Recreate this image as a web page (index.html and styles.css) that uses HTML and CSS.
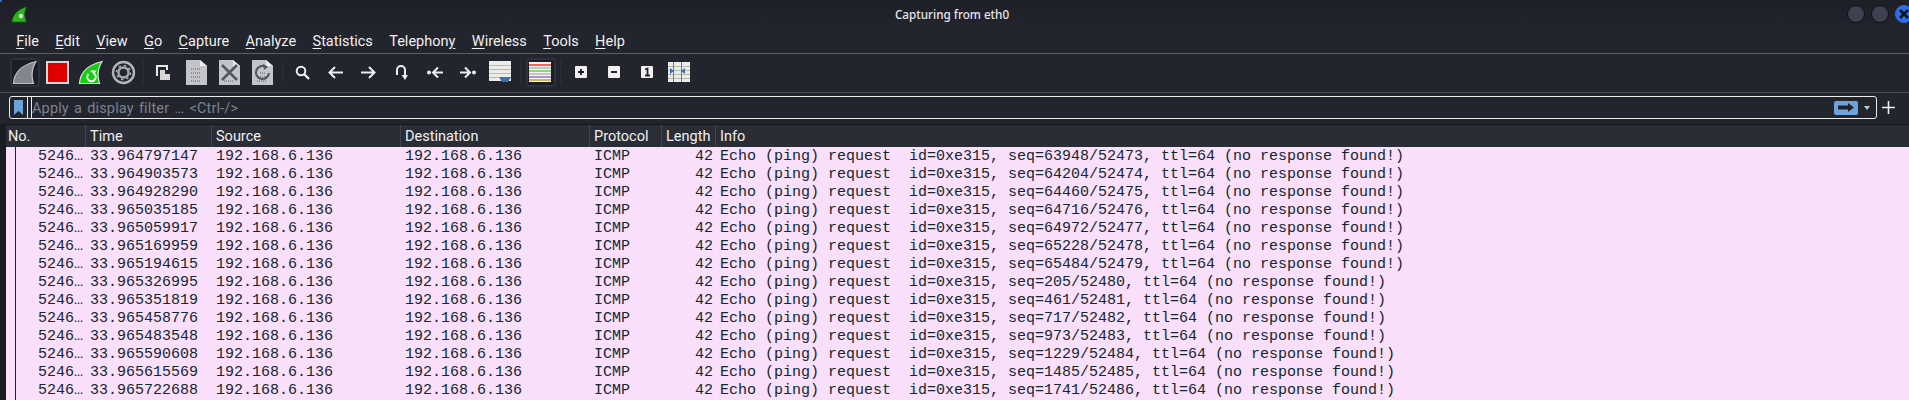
FILE: index.html
```html
<!DOCTYPE html>
<html lang="en">
<head>
<meta charset="utf-8">
<title>Capturing from eth0</title>
<link rel="stylesheet" href="styles.css">
</head>
<body>
<div class="window">
  <header class="titlebar">
    <svg class="app-logo" width="17" height="17" viewBox="0 0 17 17"><path d="M1 16C1.500 9 7 3 15.500 1C13 6 13 11 15.500 16Z" fill="#2fb51c" stroke="#0b6e0a" stroke-width=".8"/><circle cx="10" cy="10" r="2.200" fill="#d8f0d8"/></svg>
    <div class="title">Capturing from eth0</div>
    <div class="win-controls">
      <span class="win-btn"></span>
      <span class="win-btn"></span>
      <span class="win-btn win-close"><svg width="12" height="12" viewBox="0 0 12 12"><path d="M2 2L10 10M10 2L2 10" stroke="#10131c" stroke-width="2.600"/></svg></span>
    </div>
  </header>
  <nav class="menubar">
    <span class="menu"><u>F</u>ile</span>
    <span class="menu"><u>E</u>dit</span>
    <span class="menu"><u>V</u>iew</span>
    <span class="menu"><u>G</u>o</span>
    <span class="menu"><u>C</u>apture</span>
    <span class="menu"><u>A</u>nalyze</span>
    <span class="menu"><u>S</u>tatistics</span>
    <span class="menu">Telephon<u>y</u></span>
    <span class="menu"><u>W</u>ireless</span>
    <span class="menu"><u>T</u>ools</span>
    <span class="menu"><u>H</u>elp</span>
  </nav>
  <div class="toolbar">
    <span class="tool tool-on"><svg width="25" height="25" viewBox="0 0 25 25"><path d="M1.500 23.500C2 13 10 5 24 1.500C20 8 19 16 21.500 23.500Z" fill="#84868d" stroke="#c4c5c9" stroke-width="1.200"/></svg></span>
    <span class="tool"><svg width="23" height="23" viewBox="0 0 23 23"><rect x="1" y="1" width="21" height="21" fill="#e00000" stroke="#d6d6d6" stroke-width="2"/></svg></span>
    <span class="tool"><svg width="25" height="25" viewBox="0 0 25 25"><path d="M1.500 23.500C2 13 10 5 24 1.500C20 8 19 16 21.500 23.500Z" fill="#13d00f" stroke="#e2e2e2" stroke-width="1.200"/><path d="M16.500 14A4.200 4.200 0 1 1 10.500 14" fill="none" stroke="#f0f0f0" stroke-width="2"/><path d="M12 10.500L16 14.500L18.500 10.500Z" fill="#f0f0f0"/></svg></span>
    <span class="tool"><svg width="25" height="25" viewBox="0 0 25 25"><circle cx="12.500" cy="12.500" r="10.500" fill="none" stroke="#b4b5b9" stroke-width="2.400"/><circle cx="12.500" cy="12.500" r="5" fill="none" stroke="#a8a9ae" stroke-width="2.400"/><circle cx="12.500" cy="12.500" r="7" fill="none" stroke="#a8a9ae" stroke-width="1.600" stroke-dasharray="2.500 3"/></svg></span>
    <span class="tool-sep"></span>
    <span class="tool"><svg width="15" height="15" viewBox="0 0 15 15"><path d="M1 11V1H11V5" fill="none" stroke="#e8e8e8" stroke-width="2"/><path d="M4 5H9V9H14V15H4Z" fill="#d6d6d6"/></svg></span>
    <span class="tool"><svg width="21" height="25" viewBox="0 0 21 25"><path d="M0 0H14L21 6V25H0Z" fill="#c3c5ca"/><path d="M14 0L21 6H14Z" fill="#eeeef0"/><path class="bits" d="M5 9H15M5 13H15M5 17H15M5 21H15"/></svg></span>
    <span class="tool"><svg width="21" height="25" viewBox="0 0 21 25"><path d="M0 0H14L21 6V25H0Z" fill="#c3c5ca"/><path d="M14 0L21 6H14Z" fill="#eeeef0"/><path class="bits" d="M5 21H15"/><path d="M3 5L18 20M18 5L3 20" stroke="#55575e" stroke-width="2.600"/></svg></span>
    <span class="tool"><svg width="21" height="25" viewBox="0 0 21 25"><path d="M0 0H14L21 6V25H0Z" fill="#c3c5ca"/><path d="M14 0L21 6H14Z" fill="#eeeef0"/><path class="bits" d="M8 13H14M8 17H14M5 21H15"/><path d="M14 7A6.500 6.500 0 1 0 17 13" fill="none" stroke="#55575e" stroke-width="2.200"/><path d="M11 4L16 7L12 10Z" fill="#55575e"/></svg></span>
    <span class="tool-sep"></span>
    <span class="tool"><svg width="15" height="15" viewBox="0 0 15 15"><circle cx="6" cy="6" r="4.300" fill="none" stroke="#eee" stroke-width="2"/><path d="M9 9L14 14" stroke="#eee" stroke-width="2.400"/></svg></span>
    <span class="tool"><svg width="15" height="13" viewBox="0 0 15 13"><path d="M15 6.500H2M7 1L1.500 6.500L7 12" fill="none" stroke="#eee" stroke-width="2"/></svg></span>
    <span class="tool"><svg width="15" height="13" viewBox="0 0 15 13"><path d="M0 6.500H13M8 1L13.500 6.500L8 12" fill="none" stroke="#eee" stroke-width="2"/></svg></span>
    <span class="tool"><svg width="13" height="15" viewBox="0 0 13 15"><path d="M2 10V5A4 4 0 0 1 10 5V11" fill="none" stroke="#eee" stroke-width="2"/><path d="M6.500 10H13L10 15Z" fill="#eee"/></svg></span>
    <span class="tool"><svg width="16" height="13" viewBox="0 0 16 13"><circle cx="2" cy="6.500" r="2" fill="#eee"/><path d="M16 6.500H6M11 1.500L6 6.500L11 11.500" fill="none" stroke="#eee" stroke-width="2"/></svg></span>
    <span class="tool"><svg width="16" height="13" viewBox="0 0 16 13"><circle cx="14" cy="6.500" r="2" fill="#eee"/><path d="M0 6.500H10M5 1.500L10 6.500L5 11.500" fill="none" stroke="#eee" stroke-width="2"/></svg></span>
    <span class="tool"><svg width="23" height="22" viewBox="0 0 23 22"><rect width="22" height="20" fill="#ecece8"/><path d="M0 4.500H22M0 8.500H22M0 12.500H22M0 16.500H22" stroke="#b8b8b2"/><path d="M10 16H22L19 21H13Z" fill="#3c6fb0"/></svg></span>
    <span class="tool-sep"></span>
    <span class="tool tool-on"><svg width="23" height="21" viewBox="0 0 23 21"><rect width="22" height="20" fill="#f4f4f0"/><path d="M0 3H22" stroke="#e22" stroke-width="1.400"/><path d="M0 6H22" stroke="#8899aa"/><path d="M0 9H22" stroke="#6c2" stroke-width="1.400"/><path d="M0 12H22" stroke="#999"/><path d="M0 15H22" stroke="#75a" stroke-width="1.200"/><path d="M0 18H22" stroke="#c92" stroke-width="1.400"/></svg></span>
    <span class="tool-sep"></span>
    <span class="tool"><svg class="zoom-key" width="12" height="12" viewBox="0 0 12 12"><rect width="12" height="12" rx="1" fill="#f0f0f0"/><path d="M3 6H9M6 3V9" stroke="#23252e" stroke-width="2"/></svg></span>
    <span class="tool"><svg class="zoom-key" width="12" height="12" viewBox="0 0 12 12"><rect width="12" height="12" rx="1" fill="#f0f0f0"/><path d="M3 6H9" stroke="#23252e" stroke-width="2"/></svg></span>
    <span class="tool"><svg class="zoom-key" width="12" height="12" viewBox="0 0 12 12"><rect width="12" height="12" rx="1" fill="#f0f0f0"/><path d="M4 3.500L6.500 2.500V9.500M4 9.500H9" fill="none" stroke="#23252e" stroke-width="1.800"/></svg></span>
    <span class="tool"><svg width="23" height="21" viewBox="0 0 23 21"><rect width="22" height="20" fill="#ecece8"/><path d="M0 4.500H22M0 8.500H22M0 12.500H22M0 16.500H22" stroke="#b8b8b2"/><path d="M5.500 0V20M13.500 0V20" stroke="#77787c"/><path d="M2 6L6 9L2 12ZM17 6L13 9L17 12Z" fill="#3c6fb0"/></svg></span>
  </div>
  <div class="filter-row">
    <div class="filter">
      <span class="bookmark"><svg width="9" height="15" viewBox="0 0 9 15"><path d="M0 0H9V15L4.500 11L0 15Z" fill="#6ea3da"/></svg></span>
      <span class="filter-text">Apply a display filter … &lt;Ctrl-/&gt;</span>
      <span class="go"><svg width="16" height="9" viewBox="0 0 16 9"><path d="M0 2.500H10V0L16 4.500L10 9V6.500H0Z" fill="#20232d"/></svg></span>
      <span class="drop"></span>
    </div>
    <svg class="add" width="13" height="13" viewBox="0 0 13 13"><path d="M0 6.500H13M6.500 0V13" stroke="#f0f0f0" stroke-width="1.600"/></svg>
  </div>
  <div class="packets">
    <div class="row head"><span>No.</span><span>Time</span><span>Source</span><span>Destination</span><span>Protocol</span><span>Length</span><span>Info</span></div>
    <div class="rows">
      <div class="row"><span class="num">5246…</span><span>33.964797147</span><span>192.168.6.136</span><span>192.168.6.136</span><span>ICMP</span><span class="num">42</span><span>Echo (ping) request  id=0xe315, seq=63948/52473, ttl=64 (no response found!)</span></div>
      <div class="row"><span class="num">5246…</span><span>33.964903573</span><span>192.168.6.136</span><span>192.168.6.136</span><span>ICMP</span><span class="num">42</span><span>Echo (ping) request  id=0xe315, seq=64204/52474, ttl=64 (no response found!)</span></div>
      <div class="row"><span class="num">5246…</span><span>33.964928290</span><span>192.168.6.136</span><span>192.168.6.136</span><span>ICMP</span><span class="num">42</span><span>Echo (ping) request  id=0xe315, seq=64460/52475, ttl=64 (no response found!)</span></div>
      <div class="row"><span class="num">5246…</span><span>33.965035185</span><span>192.168.6.136</span><span>192.168.6.136</span><span>ICMP</span><span class="num">42</span><span>Echo (ping) request  id=0xe315, seq=64716/52476, ttl=64 (no response found!)</span></div>
      <div class="row"><span class="num">5246…</span><span>33.965059917</span><span>192.168.6.136</span><span>192.168.6.136</span><span>ICMP</span><span class="num">42</span><span>Echo (ping) request  id=0xe315, seq=64972/52477, ttl=64 (no response found!)</span></div>
      <div class="row"><span class="num">5246…</span><span>33.965169959</span><span>192.168.6.136</span><span>192.168.6.136</span><span>ICMP</span><span class="num">42</span><span>Echo (ping) request  id=0xe315, seq=65228/52478, ttl=64 (no response found!)</span></div>
      <div class="row"><span class="num">5246…</span><span>33.965194615</span><span>192.168.6.136</span><span>192.168.6.136</span><span>ICMP</span><span class="num">42</span><span>Echo (ping) request  id=0xe315, seq=65484/52479, ttl=64 (no response found!)</span></div>
      <div class="row"><span class="num">5246…</span><span>33.965326995</span><span>192.168.6.136</span><span>192.168.6.136</span><span>ICMP</span><span class="num">42</span><span>Echo (ping) request  id=0xe315, seq=205/52480, ttl=64 (no response found!)</span></div>
      <div class="row"><span class="num">5246…</span><span>33.965351819</span><span>192.168.6.136</span><span>192.168.6.136</span><span>ICMP</span><span class="num">42</span><span>Echo (ping) request  id=0xe315, seq=461/52481, ttl=64 (no response found!)</span></div>
      <div class="row"><span class="num">5246…</span><span>33.965458776</span><span>192.168.6.136</span><span>192.168.6.136</span><span>ICMP</span><span class="num">42</span><span>Echo (ping) request  id=0xe315, seq=717/52482, ttl=64 (no response found!)</span></div>
      <div class="row"><span class="num">5246…</span><span>33.965483548</span><span>192.168.6.136</span><span>192.168.6.136</span><span>ICMP</span><span class="num">42</span><span>Echo (ping) request  id=0xe315, seq=973/52483, ttl=64 (no response found!)</span></div>
      <div class="row"><span class="num">5246…</span><span>33.965590608</span><span>192.168.6.136</span><span>192.168.6.136</span><span>ICMP</span><span class="num">42</span><span>Echo (ping) request  id=0xe315, seq=1229/52484, ttl=64 (no response found!)</span></div>
      <div class="row"><span class="num">5246…</span><span>33.965615569</span><span>192.168.6.136</span><span>192.168.6.136</span><span>ICMP</span><span class="num">42</span><span>Echo (ping) request  id=0xe315, seq=1485/52485, ttl=64 (no response found!)</span></div>
      <div class="row"><span class="num">5246…</span><span>33.965722688</span><span>192.168.6.136</span><span>192.168.6.136</span><span>ICMP</span><span class="num">42</span><span>Echo (ping) request  id=0xe315, seq=1741/52486, ttl=64 (no response found!)</span></div>
    </div>
  </div>
</div>
```
FILE: styles.css
```css
* { box-sizing: border-box; }
html, body { margin: 0; height: 100%; overflow: hidden; }
body { background: #22242e; color: #f0f0f0; font-family: Roboto, sans-serif; }
.window { display: flex; flex-direction: column; height: 400px; width: 1909px; }

.titlebar { height: 30px; flex: none; display: flex; align-items: center; padding: 0 0 2px 11px; background: radial-gradient(circle at 0 0, #2a6fe8 2px, transparent 2.500px), linear-gradient(#1e1f28, #22242e); }
.title { flex: 1; text-align: center; font: 500 11.700px "Noto Sans", sans-serif; color: #e6e6e8; padding-left: 29px; }
.win-controls { display: flex; gap: 6px; margin-right: -4px; }
.win-btn { width: 18px; height: 18px; border-radius: 50%; background: #3d4150; border: 1px solid #0f1015; display: flex; align-items: center; justify-content: center; }
.win-close { background: #2a6fe8; border-color: #2a6fe8; }

.menubar { height: 24px; flex: none; display: flex; padding-left: 8px; border-bottom: 1px solid #5c5e66; font-size: 14.500px; line-height: 24px; }
.menu { padding: 0 8.200px; }
.menu u { text-underline-offset: 1.500px; }

.toolbar { height: 39px; flex: none; display: flex; align-items: center; padding: 0 0 2px 8px; border-bottom: 1px solid #4c4e56; }
.tool { width: 33px; height: 29px; display: flex; align-items: center; justify-content: center; }
.tool-on { width: 30px; margin: 0 1.500px; background: #1c1e26; border: 2px solid #2e313b; border-radius: 3px; }
.tool-sep { width: 7px; height: 24px; display: flex; justify-content: center; }
.tool-sep::before { content: ""; width: 1px; background: #2c2f39; }
.bits { stroke: #8f9095; stroke-width: 2; stroke-dasharray: 1 1; fill: none; }

.filter-row { height: 31px; flex: none; display: flex; align-items: center; padding: 0 0 2px 9px; }
.filter { width: 1868px; height: 23px; display: flex; align-items: center; border: 1px solid #ececec; border-radius: 3px; }
.bookmark { width: 18px; height: 21px; border-right: 1px solid #ececec; display: flex; align-items: center; justify-content: center; flex: none; }
.filter-text { flex: 1; height: 21px; padding-left: 4px; font-size: 14.500px; letter-spacing: .15px; word-spacing: 1.400px; color: #7e828c; position: relative; line-height: 24px; }
.filter-text::before { content: ""; position: absolute; left: 3px; top: 0; bottom: 0; width: 1px; background: #ececec; }
.go { width: 24px; height: 14px; border-radius: 2px; background: #6ea3da; display: flex; align-items: center; justify-content: center; flex: none; }
.drop { width: 18px; flex: none; display: flex; justify-content: center; }
.drop::before { content: ""; border: 3.500px solid transparent; border-top: 4px solid #c8c8c8; border-bottom: 0; }
.add { margin-left: 5px; }

.packets { flex: 1; display: flex; flex-direction: column; padding: 0 0 0 6px; min-height: 0; background: #1a1c23; }
.row { display: grid; grid-template-columns: 80px 126px 189px 189px 72px 54px 1fr; height: 18px; font: 15px/20px "Liberation Mono", monospace; color: #12272e; white-space: pre; }
.row > span { padding-left: 4px; overflow: hidden; }
.row > .num { padding: 0 3px 0 0; text-align: right; }
.head { flex: none; height: 23px; font: 14.500px/24px Roboto, sans-serif; color: #f0f0f0; background: #2a2d36; border-top: 1px solid #14151b; }
.head > span { border-right: 1px solid #41444e; padding-left: 0; text-indent: 4px; }
.head > span:first-child { text-indent: 2px; }
.head > span:last-child { border-right: 0; }
.rows { flex: 1; background: linear-gradient(#12272e, #12272e) 9px 0 / 1px 100% no-repeat #fadffb; overflow: hidden; }
```
